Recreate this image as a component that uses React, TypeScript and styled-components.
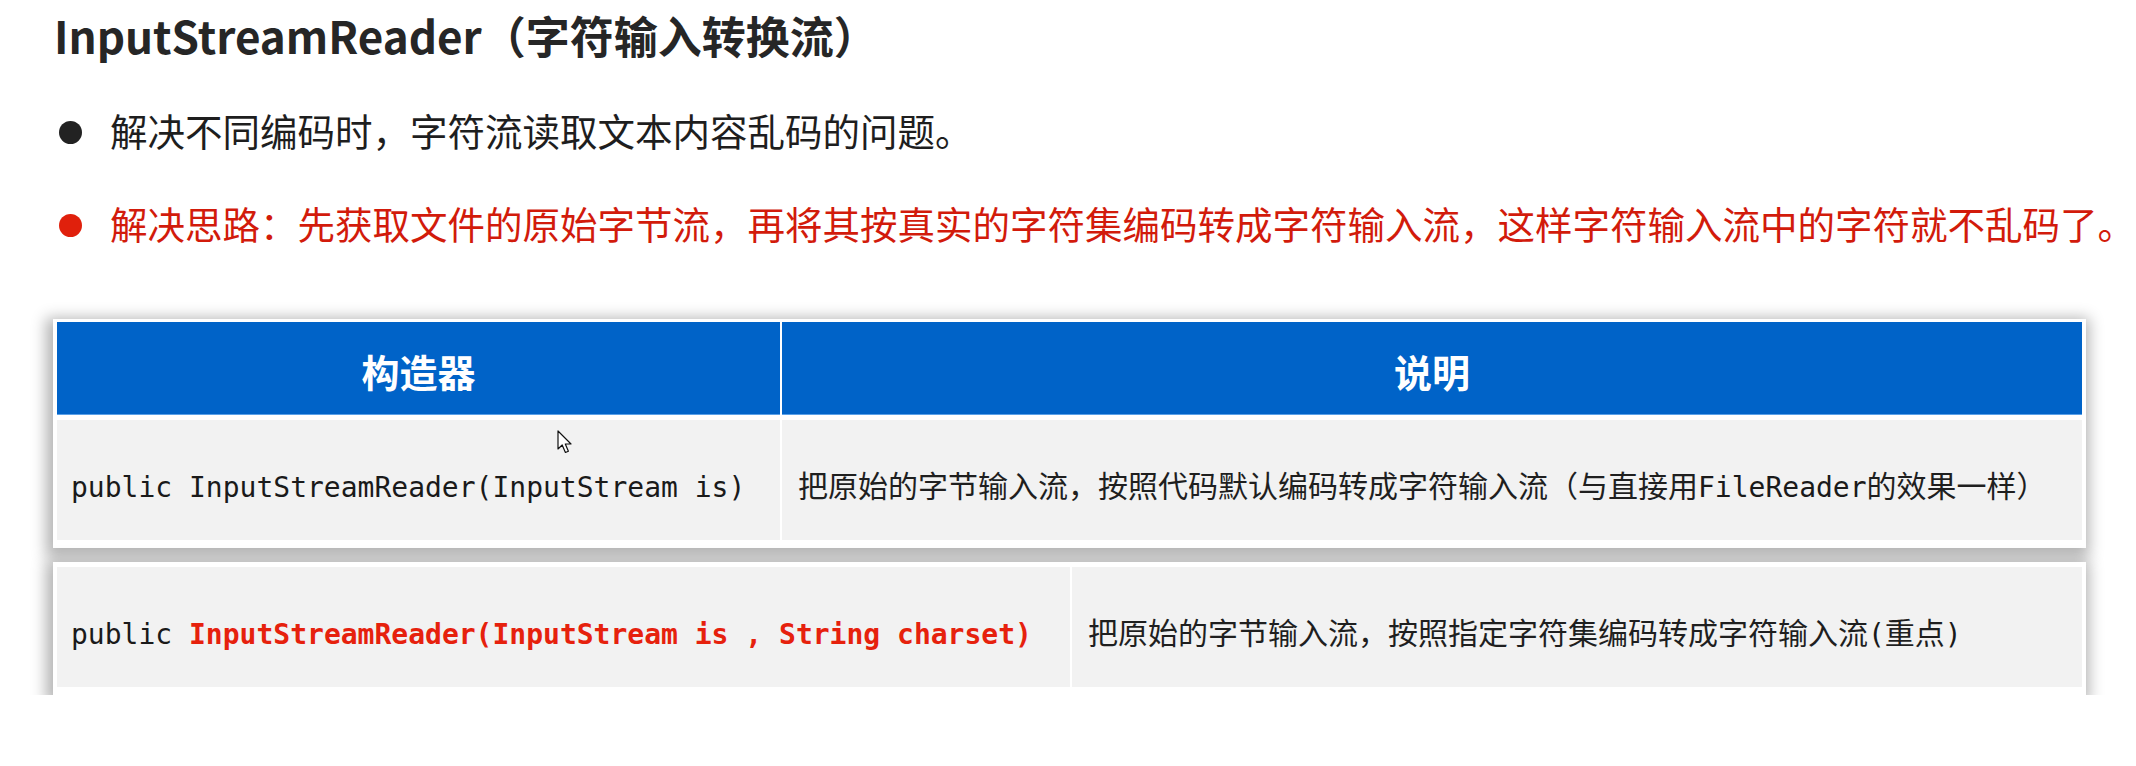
import styled, { createGlobalStyle } from "styled-components";

const GlobalStyle = createGlobalStyle`
	html, body {
		margin: 0;
		padding: 0;
		background: #ffffff;
	}
	body {
		font-family: "Noto Sans CJK SC", "Noto Sans", sans-serif;
		color: #1e1e1e;
	}
`;

const Page = styled.div`
	display: flex;
	flex-direction: column;
	padding-left: 53px;
	width: 2136px;
	box-sizing: border-box;
`;

const Title = styled.h1`
	margin: 13px 0 0 1px;
	font-size: 44px;
	line-height: 44px;
	font-weight: 700;
	color: #262626;
`;

const Bullets = styled.ul`
	list-style: none;
	margin: 54px 0 0 0;
	padding: 0;
	display: flex;
	flex-direction: column;
	gap: 55px;
`;

const Bullet = styled.li<{ $red?: boolean }>`
	display: flex;
	align-items: center;
	font-size: 37.5px;
	line-height: 38px;
	white-space: nowrap;
	color: ${(props) => (props.$red ? "#d21b0b" : "#1e1e1e")};
`;

const Dot = styled.span<{ $red?: boolean }>`
	flex: none;
	width: 23px;
	height: 23px;
	border-radius: 50%;
	margin: 5px 28px 0 6px;
	background: ${(props) => (props.$red ? "#e0200c" : "#222222")};
`;

const Card = styled.div<{ $top: number }>`
	width: 2033px;
	box-sizing: border-box;
	margin-top: ${(props) => props.$top}px;
	padding: 3px 4px 8px 4px;
	background: #ffffff;
	box-shadow: -2px 4px 14px 5px rgba(0, 0, 0, 0.3);
`;

const Row = styled.div<{ $first: number; $gapTop?: number }>`
	display: grid;
	grid-template-columns: ${(props) => props.$first}px 1fr;
	column-gap: 2px;
	margin-top: ${(props) => props.$gapTop ?? 0}px;
`;

const HeadCell = styled.div`
	height: 93px;
	box-sizing: border-box;
	padding-top: 4px;
	display: flex;
	align-items: center;
	justify-content: center;
	background: #0063c8;
	border-bottom: 1px solid #5aa0e8;
	color: #ffffff;
	font-size: 38px;
	font-weight: 700;
`;

const BodyCell = styled.div<{ $pad?: number }>`
	position: relative;
	height: 120px;
	box-sizing: border-box;
	padding: 8px 0 0 ${(props) => props.$pad ?? 16}px;
	display: flex;
	align-items: center;
	background: #f2f2f2;
	font-size: 30px;
	color: #1f1f1f;
	white-space: pre;
`;

const Line = styled.span`
	display: block;
`;

const Code = styled.span<{ $hot?: boolean }>`
	font-family: "DejaVu Sans Mono", "Liberation Mono", monospace;
	font-size: 28px;
	color: ${(props) => (props.$hot ? "#e6210d" : "#1a1a1a")};
	font-weight: ${(props) => (props.$hot ? 700 : 400)};
`;

const Pointer = styled.svg`
	position: absolute;
	left: 500px;
	top: 10px;
`;

function Cursor() {
	return (
		<Pointer width="15" height="24" viewBox="0 0 15 24">
			<path
				d="M1 1 L1 19 L5.2 15 L8.4 22.5 L11.4 21.2 L8.3 14 L14 14 Z"
				fill="#ffffff"
				stroke="#111111"
				strokeWidth="1.2"
				strokeLinejoin="round"
			/>
		</Pointer>
	);
}

function App() {
	return (
		<>
			<GlobalStyle />
			<Page>
				<Title>InputStreamReader（字符输入转换流）</Title>
				<Bullets>
					<Bullet>
						<Dot />
						解决不同编码时，字符流读取文本内容乱码的问题。
					</Bullet>
					<Bullet $red>
						<Dot $red />
						解决思路：先获取文件的原始字节流，再将其按真实的字符集编码转成字符输入流，这样字符输入流中的字符就不乱码了。
					</Bullet>
				</Bullets>

				<Card $top={77}>
					<Row $first={723}>
						<HeadCell>构造器</HeadCell>
						<HeadCell>说明</HeadCell>
					</Row>
					<Row $first={723} $gapTop={5}>
						<BodyCell $pad={14}>
							<Line>
								<Code>public InputStreamReader(InputStream is)</Code>
							</Line>
							<Cursor />
						</BodyCell>
						<BodyCell>
							<Line>
								把原始的字节输入流，按照代码默认编码转成字符输入流（与直接用
								<Code>FileReader</Code>的效果一样）
							</Line>
						</BodyCell>
					</Row>
				</Card>

				<Card $top={14}>
					<Row $first={1013} $gapTop={2}>
						<BodyCell $pad={14}>
							<Line>
								<Code>public </Code>
								<Code $hot>InputStreamReader(InputStream is , String charset)</Code>
							</Line>
						</BodyCell>
						<BodyCell>
							<Line>
								把原始的字节输入流，按照指定字符集编码转成字符输入流<Code>(</Code>重点<Code>)</Code>
							</Line>
						</BodyCell>
					</Row>
				</Card>
			</Page>
		</>
	);
}

export default App;
